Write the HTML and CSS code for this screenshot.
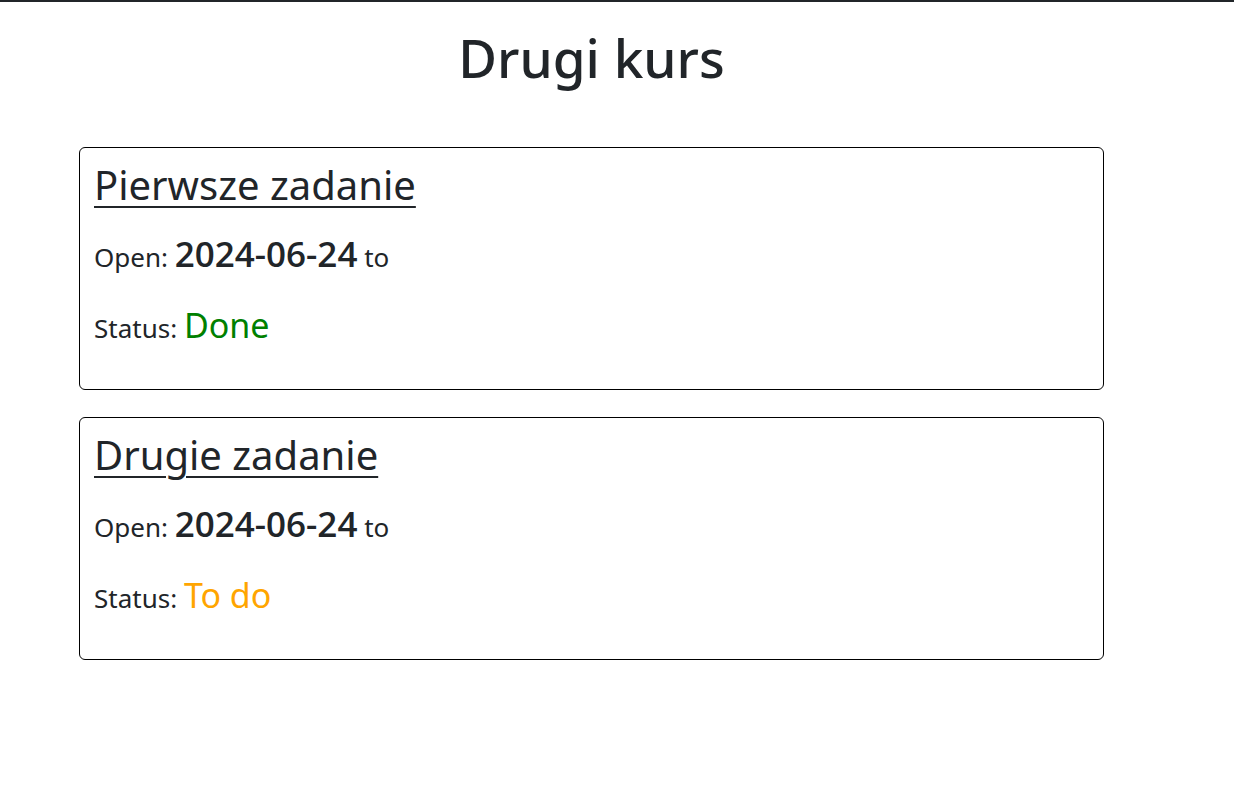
FILE: index.html
```html
<!DOCTYPE html>
<html lang="pl">
<head>
<meta charset="utf-8">
<title>Drugi kurs</title>
<link rel="stylesheet" href="styles.css">
</head>
<body>
<main class="page">
  <h1 class="course-title">Drugi kurs</h1>
  <section class="task-card">
    <h2 class="task-title"><a href="#">Pierwsze zadanie</a></h2>
    <p class="task-line task-open">Open: <span class="date">2024-06-24</span> to</p>
    <p class="task-line task-status">Status: <span class="status status-done">Done</span></p>
  </section>
  <section class="task-card">
    <h2 class="task-title"><a href="#">Drugie zadanie</a></h2>
    <p class="task-line task-open">Open: <span class="date">2024-06-24</span> to</p>
    <p class="task-line task-status">Status: <span class="status status-todo">To do</span></p>
  </section>
</main>
</body>
</html>
```

FILE: styles.css
```css
* { box-sizing: border-box; }

html, body {
  margin: 0;
  padding: 0;
  background: #fff;
}

body {
  border-top: 2px solid #212529;
  color: #212529;
  font-family: "Noto Sans", "Open Sans", sans-serif;
  min-height: 789px;
}

.page {
  width: 1025px;
  margin-left: 79px;
  display: flex;
  flex-direction: column;
}

.course-title {
  margin: 26px 0 59px;
  font-size: 53px;
  line-height: 60px;
  font-weight: 500;
  text-align: center;
}

.task-card {
  border: 1px solid #000;
  border-radius: 6px;
  padding: 13px 14px 41px;
  margin-bottom: 27px;
}

.task-title {
  margin: 0 0 27px;
  font-size: 40px;
  line-height: 48px;
  font-weight: 400;
}

.task-title a {
  color: #212529;
  text-decoration: underline;
  text-decoration-thickness: 2px;
  text-underline-offset: 6px;
}

.task-line {
  margin: 0;
  font-size: 26px;
  line-height: 40px;
}

.task-status {
  margin-top: 31px;
}

.date {
  font-family: "Open Sans", "Noto Sans", sans-serif;
  font-size: 35px;
  line-height: 1;
  font-weight: 600;
}

.status {
  font-size: 34px;
  line-height: 1;
}

.status-done { color: #008000; }
.status-todo { color: #ffa500; }
```
